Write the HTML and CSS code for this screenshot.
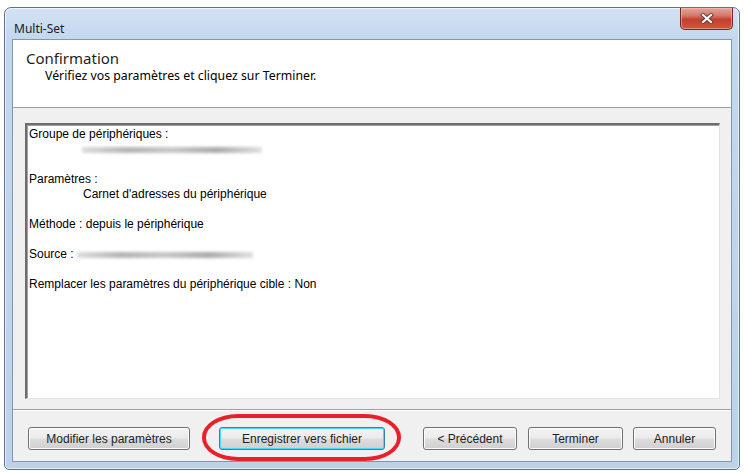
FILE: index.html
```html
<!DOCTYPE html>
<html lang="fr">
<head>
    <meta charset="UTF-8">
    <title>Multi-Set</title>
    <link rel="stylesheet" href="styles.css">
</head>
<body>
    <div class="window">
        <div class="titlebar">
            <span class="title">Multi-Set</span>
            <div class="close">
                <svg width="14" height="11" viewBox="0 0 14 11">
                    <path d="M3 2 L11 9 M11 2 L3 9" stroke="#5a3a36" stroke-width="4" stroke-linecap="square"/>
                    <path d="M3 2 L11 9 M11 2 L3 9" stroke="#ffffff" stroke-width="2.2" stroke-linecap="square"/>
                </svg>
            </div>
        </div>
        <div class="client">
            <div class="header">
                <div class="heading">Confirmation</div>
                <div class="subheading">Vérifiez vos paramètres et cliquez sur Terminer.</div>
            </div>
            <div class="body">
                <div class="summary">
                    <div class="line">Groupe de périphériques :</div>
                    <div class="line indent-small"><span class="blur blur-group"></span></div>
                    <div class="line"></div>
                    <div class="line">Paramètres :</div>
                    <div class="line indent">Carnet d'adresses du périphérique</div>
                    <div class="line"></div>
                    <div class="line">Méthode : depuis le périphérique</div>
                    <div class="line"></div>
                    <div class="line">Source : <span class="blur blur-source"></span></div>
                    <div class="line"></div>
                    <div class="line">Remplacer les paramètres du périphérique cible : Non</div>
                </div>
                <div class="separator"></div>
                <div class="buttons">
                    <button class="btn btn-modify">Modifier les paramètres</button>
                    <div class="save-wrap">
                        <button class="btn btn-default btn-save">Enregistrer vers fichier</button>
                        <div class="highlight"></div>
                    </div>
                    <button class="btn btn-prev">&lt; Précédent</button>
                    <button class="btn btn-finish">Terminer</button>
                    <button class="btn btn-cancel">Annuler</button>
                </div>
            </div>
        </div>
    </div>
</body>
</html>
```

FILE: styles.css
```css
body {
    margin: 0;
    background-color: #ffffff;
    font-family: "Liberation Sans", Arial, sans-serif;
    font-size: 12px;
    color: #000000;
}

.window {
    width: 736px;
    height: 463px;
    margin: 7px 0 0 4px;
    box-sizing: border-box;
    border: 1px solid #5f738b;
    border-radius: 7px 7px 5px 5px;
    padding: 0 7px 7px 7px;
    background: linear-gradient(to bottom, #d3e2f3 0px, #c3d7ee 30px, #bcd2ea 100%);
    box-shadow: inset 0 0 0 1px rgba(255, 255, 255, 0.6);
}

.titlebar {
    height: 31px;
    display: flex;
    align-items: flex-start;
    justify-content: space-between;
}

.title {
    margin: 12px 0 0 2px;
    font-family: "Noto Sans", "Liberation Sans", sans-serif;
    font-size: 12px;
    color: #1a1a1a;
}

.close {
    width: 53px;
    height: 22px;
    margin-right: -1px;
    box-sizing: border-box;
    border: 1px solid #6b2a22;
    border-top: none;
    border-radius: 0 0 5px 5px;
    background: linear-gradient(to bottom, #e2a69d 0%, #d67a6d 35%, #c4402f 55%, #cd563f 100%);
    box-shadow: inset 0 0 0 1px rgba(255, 200, 190, 0.5);
    display: flex;
    align-items: center;
    justify-content: center;
}

.client {
    height: 423px;
    box-sizing: border-box;
    border: 1px solid #8396ad;
    background-color: #f0f0f0;
    display: flex;
    flex-direction: column;
}

.header {
    height: 68px;
    box-sizing: border-box;
    background-color: #ffffff;
    border-bottom: 1px solid #a0a0a0;
    padding: 8px 0 0 13px;
}

.heading {
    font-family: "Noto Sans", "Liberation Sans", sans-serif;
    font-size: 15px;
    line-height: 20px;
    color: #1e1e1e;
}

.subheading {
    margin: 0 0 0 19px;
    font-family: "Noto Sans", "Liberation Sans", sans-serif;
    font-size: 12.3px;
    line-height: 16px;
}

.body {
    flex: 1;
    display: flex;
    flex-direction: column;
    padding: 15px 11px 0 12px;
}

.summary {
    height: 276px;
    box-sizing: border-box;
    background-color: #ffffff;
    border-top: 2px solid #6d6d6d;
    border-left: 2px solid #6d6d6d;
    border-right: 1px solid #e3e3e3;
    border-bottom: 1px solid #e3e3e3;
    box-shadow: inset 1px 1px 0 #a0a0a0;
    padding: 2px 0 0 2px;
}

.line {
    height: 15px;
    line-height: 15px;
    white-space: nowrap;
}

.indent {
    padding-left: 54px;
}

.indent-small {
    padding-left: 53px;
}

.blur {
    display: inline-block;
    height: 6px;
    vertical-align: middle;
    background: linear-gradient(to right, #dedede, #b4b4b4 25%, #c8c8c8 50%, #aaaaaa 75%, #e0e0e0);
    filter: blur(1.4px);
}

.blur-group {
    width: 180px;
}

.blur-source {
    width: 176px;
}

.separator {
    margin: 10px -11px 0 -12px;
    height: 1px;
    background-color: #a0a0a0;
    border-bottom: 1px solid #ffffff;
}

.buttons {
    display: flex;
    margin-top: 16px;
    padding-left: 3px;
}

.btn {
    height: 23px;
    box-sizing: border-box;
    border: 1px solid #707070;
    border-radius: 3px;
    background: linear-gradient(to bottom, #f3f3f3 0%, #ebebeb 48%, #dddddd 52%, #cfcfcf 100%);
    box-shadow: inset 0 0 0 1px #fcfcfc;
    font-family: "Liberation Sans", Arial, sans-serif;
    font-size: 12px;
    font-weight: normal;
    color: #222222;
    padding: 0;
}

.btn-default {
    border-color: #3c7fb1;
    box-shadow: inset 0 0 0 1px #48d8fb;
}

.btn-modify {
    width: 162px;
}

.save-wrap {
    position: relative;
    margin-left: 29px;
}

.btn-save {
    width: 166px;
}

.highlight {
    position: absolute;
    left: -17px;
    top: -13px;
    width: 199px;
    height: 47px;
    box-sizing: border-box;
    border: 4px solid #e8202a;
    border-radius: 36px / 23px;
}

.btn-prev {
    width: 94px;
    margin-left: 38px;
}

.btn-finish {
    width: 95px;
    margin-left: 11px;
}

.btn-cancel {
    width: 83px;
    margin-left: 10px;
}
```
